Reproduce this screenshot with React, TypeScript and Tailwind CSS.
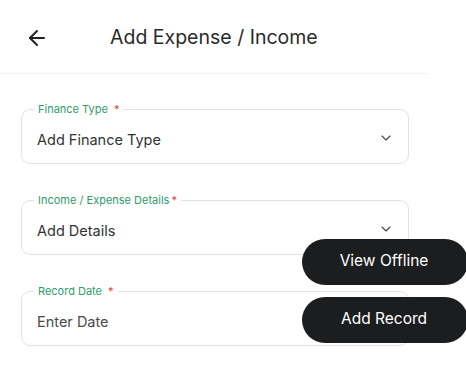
import { ArrowLeft, ChevronDown } from 'lucide-react';

type Field = { label: string; placeholder: string; select: boolean };

const fields: Field[] = [
  { label: 'Finance Type', placeholder: 'Add Finance Type', select: true },
  { label: 'Income / Expense Details', placeholder: 'Add Details', select: true },
  { label: 'Record Date', placeholder: 'Enter Date', select: false },
];

const FormField = ({ field }: { field: Field }) => (
  <div className="relative h-[55px] w-[388px] rounded-[9px] border border-[#e2e2e2] bg-white">
    {/* floating label sits on top of the border */}
    <span className="absolute -top-[8px] left-[12px] bg-white px-[4px] text-[11px] leading-[14px] text-[#2f9c6c]">
      {field.label}
      <span className={field.label.length > 15 ? 'ml-[2px] text-[#e0453a]' : 'ml-[6px] text-[#e0453a]'}>*</span>
    </span>
    <div className="flex h-full items-center justify-between pl-[15px] pr-[14px] pt-[6px]">
      <span className={field.select ? 'text-[14.5px] text-[#333]' : 'text-[14.5px] text-[#4a4a4a]'}>
        {field.placeholder}
      </span>
      {field.select && <ChevronDown className="-mt-[4px] h-[16px] w-[16px] text-[#444]" strokeWidth={1.6} />}
    </div>
  </div>
);

export default function App() {
  return (
    <div className="relative h-[377px] w-[466px] overflow-hidden bg-white font-['Inter',sans-serif]">
      <header className="flex h-[74px] w-[428px] items-center border-b border-[#f1f1f1] pl-[25px] pt-[2px]">
        <ArrowLeft className="h-[24px] w-[24px] text-[#222]" strokeWidth={2} />
        <h1 className="ml-[61px] text-[19.5px] text-[#2a2a2a]">Add Expense / Income</h1>
      </header>

      <div className="flex flex-col gap-[36px] pl-[21px] pt-[35px]">
        {fields.map((f) => (
          <FormField key={f.label} field={f} />
        ))}
      </div>

      {/* floating action buttons */}
      <div className="absolute left-[302px] top-[239px] flex flex-col gap-[12px]">
        <button className="h-[46px] w-[166px] rounded-full bg-[#1c1d1f] pb-[2px] pr-[2px] text-[15.5px] text-white">
          View Offline
        </button>
        <button className="h-[46px] w-[166px] rounded-full bg-[#1c1d1f] pb-[2px] pr-[2px] text-[15.5px] text-white">
          Add Record
        </button>
      </div>
    </div>
  );
}
